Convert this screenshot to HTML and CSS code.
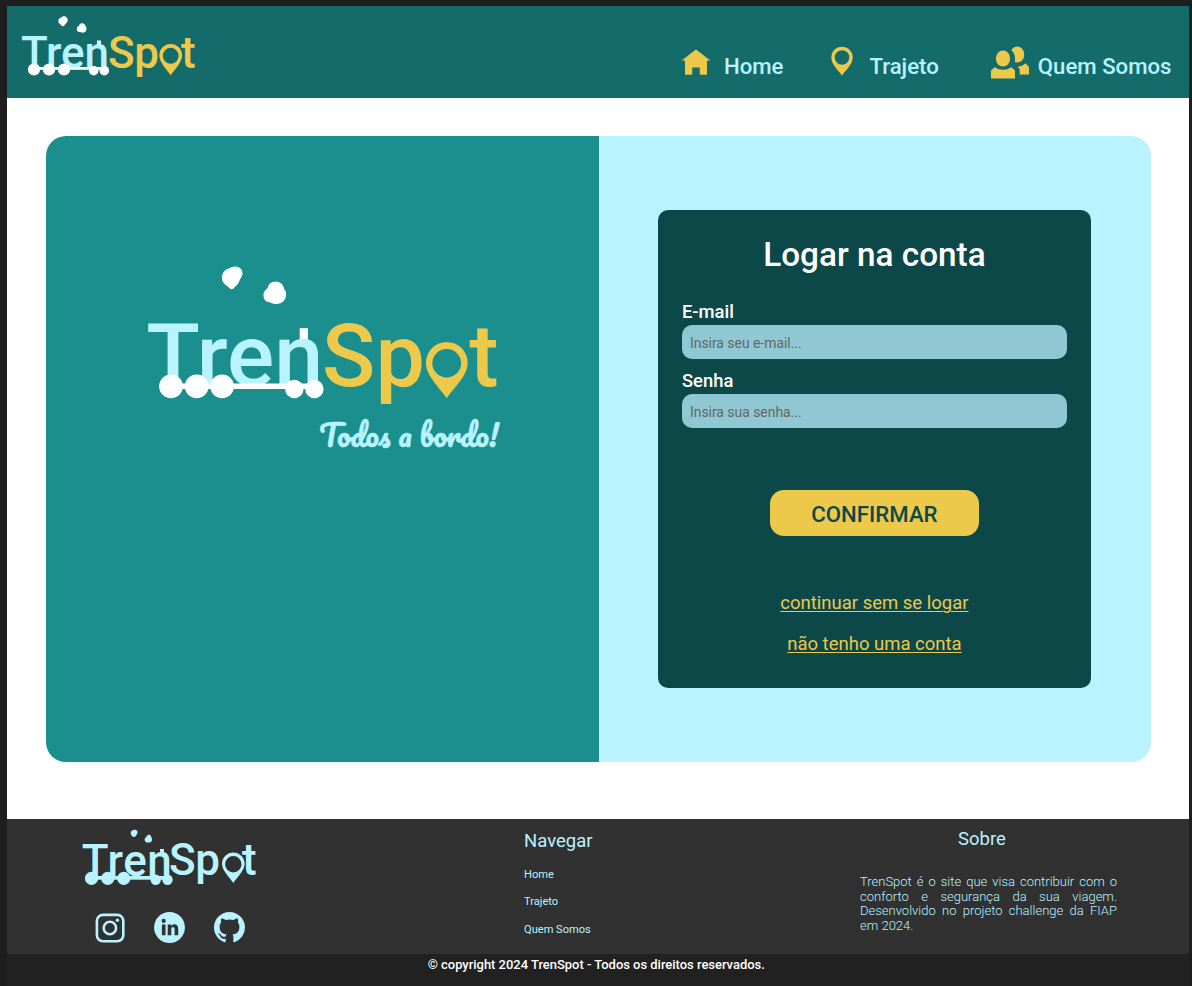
FILE: index.html
```html
<!DOCTYPE html>
<html lang="pt-BR">
<head>
<meta charset="utf-8">
<title>TrenSpot - Login</title>
<link rel="stylesheet" href="styles.css">
</head>
<body>
<div class="page">
  <header class="header">
    <svg class="header-logo" viewBox="20 12 180 68" role="img" aria-label="TrenSpot">
      <rect class="white" x="97" y="40.5" width="4" height="6"/>
      <text class="logo-text ice" x="21" y="68" font-size="44" textLength="88">Tren</text>
      <text class="logo-text gold" x="108" y="68" font-size="44" textLength="51">Sp</text>
      <text class="logo-text gold" x="181" y="68" font-size="44">t</text>
      <path class="gold" fill-rule="evenodd" d="M170.700 75.300C167.500 70.500 159.300 62.500 159.300 55.500A11.400 11.500 0 0 1 182.100 55.500C182.100 62.500 173.900 70.500 170.700 75.300ZM170.700 47.800A7.900 8 0 1 0 170.700 63.800A7.900 8 0 1 0 170.700 47.800Z"/>
      <g class="white">
        <path d="M58.300 21C58.500 18 61 18 62.500 16.500C65 15.500 68 17.500 67.700 20.500C67.400 22.500 65.500 23.500 64.500 25.200C63.300 26.800 62 26.500 61 25C59.500 23.500 58.300 23 58.300 21Z"/>
        <path d="M76.800 29C76.800 26.500 78.700 26.800 79.300 24.800C80.500 22.500 84 22.600 85 25C85.800 26.500 86.800 27.500 86.400 29.700C86 32.500 82.500 33.500 80.500 32.100C78.500 32.200 76.800 31.500 76.800 29Z"/>
        <rect x="34" y="67" width="70" height="2.800"/>
        <circle cx="34" cy="69.500" r="6.100"/><circle cx="49" cy="69.500" r="6.100"/><circle cx="64" cy="69.500" r="6.100"/>
        <circle cx="93.700" cy="70.700" r="4.800"/><circle cx="104.300" cy="70.700" r="4.800"/>
      </g>
    </svg>
    <nav class="nav">
      <a class="nav-link nav-home" href="#">
        <svg viewBox="0 0 30 27" width="30" height="27"><path d="M15 .6 29.300 11.600H26V25.800H18.800V18.400H11.200V25.800H4V11.600H.7Z"/></svg>
        <span>Home</span>
      </a>
      <a class="nav-link nav-route" href="#">
        <svg viewBox="0 0 24 30" width="24" height="30"><path fill-rule="evenodd" d="M12 29.700C9 24.800 1.300 18.600 1.300 11.500A10.700 10.800 0 0 1 22.700 11.500C22.700 18.600 15 24.800 12 29.700ZM12 4.200A7.300 7.300 0 1 0 12 18.800A7.300 7.300 0 1 0 12 4.200Z"/></svg>
        <span>Trajeto</span>
      </a>
      <a class="nav-link nav-about" href="#">
        <svg viewBox="0 0 38 33" width="38" height="33"><ellipse cx="12" cy="12.500" rx="7.100" ry="8.100"/><path d="M0 32.600V24.600L3.500 21.300Q12 26.400 20.500 21.300L24 24.600V32.600ZM20.300 4.100C22.500 1.500 24 .6 26.500 .6C30.500 .6 33.200 4.400 33.200 8.800C33.200 13.700 30 17.200 23.800 16.300C24.500 11 24 7.500 20.300 4.100ZM26.700 20.600Q31 20.600 34.300 17.300L38 21V28.600H28.700V23.600Z"/></svg>
        <span>Quem Somos</span>
      </a>
    </nav>
  </header>

  <main class="main">
    <section class="card">
      <div class="brand">
        <svg class="brand-logo" viewBox="140 260 370 200" role="img" aria-label="TrenSpot - Todos a bordo!">
          <rect class="white" x="299.700" y="328.200" width="8.200" height="13"/>
          <text class="logo-text ice" x="146.200" y="386" font-size="88" textLength="177">Tren</text>
          <text class="logo-text gold" x="322" y="386" font-size="88" textLength="103">Sp</text>
          <text class="logo-text gold" x="469.200" y="386" font-size="88">t</text>
          <path class="gold" fill-rule="evenodd" d="M446.700 398.300C440.500 388.500 425.900 376 425.900 363A20.800 21 0 0 1 467.700 363C467.700 376 453 388.500 446.700 398.300ZM446.700 349A14.400 14.200 0 1 0 446.700 377.400A14.400 14.200 0 1 0 446.700 349Z"/>
          <g class="white">
            <path d="M222 278.500C221.700 272.500 225.500 269 229.700 268.300C233 265.500 239 265.500 241.800 270C244 275 240.500 277.500 239.200 281.500C237.500 285.500 235 286.300 233.500 288.500C232 289.700 230 289.200 228.700 287.300C226 284.700 222.200 283.500 222 278.500Z"/>
            <path d="M263.500 295.500C263.300 291.500 266 289.300 267.800 288C268 284 271.500 281.500 276 281.400C280.500 281.600 283.500 285 284 288.500C287 292 286.800 297.500 283.800 301C280 305 274 304.500 269.500 302.200C266.200 302.400 263.500 299.500 263.500 295.500Z"/>
            <rect x="171" y="383.500" width="143" height="5.500"/>
            <circle cx="171" cy="386.300" r="11.900"/><circle cx="196.700" cy="386.300" r="11.900"/><circle cx="222.100" cy="386.300" r="11.900"/>
            <circle cx="294.300" cy="389" r="9.200"/><circle cx="314.400" cy="389" r="9.200"/>
          </g>
          <text class="tagline ice" x="319.200" y="447" font-size="29.500">Todos a bordo!</text>
        </svg>
      </div>
      <div class="access">
        <form class="login">
          <h1 class="login-title">Logar na conta</h1>
          <label class="login-label" for="email">E-mail</label>
          <input class="login-input" id="email" type="email" placeholder="Insira seu e-mail...">
          <label class="login-label" for="senha">Senha</label>
          <input class="login-input" id="senha" type="password" placeholder="Insira sua senha...">
          <button class="login-button" type="button">CONFIRMAR</button>
          <a class="login-link" href="#">continuar sem se logar</a>
          <a class="login-link" href="#">não tenho uma conta</a>
        </form>
      </div>
    </section>
  </main>

  <footer class="footer">
    <div class="footer-brand">
      <svg class="footer-logo" viewBox="80 826 180 62" role="img" aria-label="TrenSpot">
        <rect x="160" y="849" width="4" height="6"/>
        <text class="logo-text" x="81.800" y="876" font-size="44" textLength="90">Tren</text>
        <text class="logo-text" x="169" y="875" font-size="44" textLength="51">Sp</text>
        <text class="logo-text" x="242" y="875" font-size="44">t</text>
        <path fill-rule="evenodd" d="M233.300 883C230 878 222 870.500 222 864A11.300 11.500 0 0 1 244.600 864C244.600 870.500 236.600 878 233.300 883ZM233.300 856A8.200 8.200 0 1 0 233.300 872.400A8.200 8.200 0 1 0 233.300 856Z"/>
        <path d="M130.700 833C130.700 830.800 132.500 830.600 134 829.800C136.500 829.200 138.200 831.200 137.400 833.300C136.500 834.700 136 836.800 134.200 837.100C132.500 837 130.700 835.200 130.700 833Z"/>
        <path d="M144.600 839.500C144.700 837.700 146.200 837.500 146.800 836C148 834.200 150.500 834.500 151.200 836.700C152.300 838.500 152.500 841.500 150.300 842.300C148.500 842.800 144.500 843 144.600 839.500Z"/>
        <rect x="91" y="876" width="77" height="3.700"/>
        <circle cx="91.500" cy="878.400" r="6.600"/><circle cx="107.700" cy="878.400" r="6.600"/><circle cx="123.800" cy="878.400" r="6.600"/>
        <circle cx="155.700" cy="879.700" r="5.200"/><circle cx="167.500" cy="879.700" r="5.200"/>
      </svg>
      <div class="social">
        <a href="#" aria-label="Instagram"><svg viewBox="0 0 30 30" width="30" height="30"><g fill="none" stroke="currentColor" stroke-width="2.600"><rect x="1.900" y="1.900" width="26.400" height="26.400" rx="6"/><circle cx="14.900" cy="15" r="6.200"/></g><circle cx="22.400" cy="7.300" r="1.700"/></svg></a>
        <a href="#" aria-label="LinkedIn"><svg viewBox="0 0 31 31" width="31" height="31"><circle cx="15.500" cy="15.500" r="15.400"/><g fill="#313131"><circle cx="9.700" cy="8.900" r="2.100"/><path d="M7.900 12.400H11.500V23.300H7.900ZM13.700 12.400H17.100V13.900C19 11.200 24.200 11.600 24.200 16.600V23.300H20.600V17.400C20.600 14.200 17.300 14.300 17.300 17.400V23.300H13.700Z"/></g></svg></a>
        <a href="#" aria-label="GitHub"><svg viewBox="0 0 16 16" width="31" height="31"><path d="M8 0C3.580 0 0 3.580 0 8c0 3.540 2.290 6.530 5.470 7.590.4.070.55-.17.55-.38 0-.19-.01-.82-.01-1.490-2.010.37-2.530-.49-2.690-.94-.09-.23-.48-.94-.82-1.130-.28-.15-.68-.52-.01-.53.63-.01 1.080.58 1.230.82.72 1.210 1.870.87 2.330.66.07-.52.28-.87.51-1.070-1.780-.2-3.640-.89-3.640-3.950 0-.87.31-1.590.82-2.150-.08-.2-.36-1.020.08-2.120 0 0 .67-.21 2.200.82.64-.18 1.320-.27 2-.27s1.360.09 2 .27c1.530-1.040 2.200-.82 2.200-.82.44 1.100.16 1.920.08 2.120.51.56.82 1.270.82 2.150 0 3.070-1.870 3.750-3.650 3.950.29.25.54.73.54 1.480 0 1.070-.01 1.930-.01 2.200 0 .21.15.46.55.38A8.010 8.010 0 0 0 16 8c0-4.420-3.580-8-8-8z"/></svg></a>
      </div>
    </div>
    <nav class="footer-nav">
      <h2 class="footer-title">Navegar</h2>
      <a href="#">Home</a>
      <a href="#">Trajeto</a>
      <a href="#">Quem Somos</a>
    </nav>
    <section class="footer-about">
      <h2 class="footer-title">Sobre</h2>
      <p>TrenSpot é o site que visa contribuir com o conforto e segurança da sua viagem. Desenvolvido no projeto challenge da FIAP em 2024.</p>
    </section>
  </footer>
  <div class="copyright">© copyright 2024 TrenSpot - Todos os direitos reservados.</div>
</div>
</body>
</html>
```
FILE: styles.css
```css
* { box-sizing: border-box; }

body {
  margin: 0;
  padding: 6.4px 3.5px 0 7px;
  height: 986px;
  overflow: hidden;
  background: #1e1e1e;
  font-family: Roboto, sans-serif;
}

a { color: inherit; text-decoration: none; }
svg { display: block; fill: currentColor; }
h1, h2, p { margin: 0; }

.page { background: #fff; }
.ice { fill: #b8f3ff; }
.gold { fill: #ecc94b; }
.white { fill: #fff; }
.logo-text { font-family: Roboto, sans-serif; font-weight: 500; }

.header {
  display: flex;
  justify-content: space-between;
  height: 92px;
  padding: 5.6px 17px 0 13px;
  background: #146c6a;
}
.header-logo { width: 180px; height: 68px; }
.nav { display: flex; align-items: flex-start; padding-top: 33px; }
.nav-link {
  display: flex;
  color: #b8f3ff;
  font-size: 22.200px;
  font-weight: 500;
  line-height: 30px;
}
.nav-link svg { color: #ecc94b; }
.nav-link span { padding-top: 6px; }
.nav-home svg { margin: 4px 13px 0 0; }
.nav-route { margin-left: 47px; }
.nav-route svg { margin: 1px 15px 0 0; }
.nav-about { margin-left: 52px; }
.nav-about svg { margin: 1px 9px 0 0; }

.main { height: 720.500px; padding: 37.900px 37.500px 0 38.600px; }
.card {
  display: grid;
  grid-template-columns: 553.100px 1fr;
  height: 625.300px;
  border-radius: 20px;
  overflow: hidden;
}
.brand { padding: 123.700px 0 0 94.400px; background: #1b8f8d; }
.brand-logo { width: 370px; height: 200px; }
.tagline {
  font-family: "Pacifico", "Lato", cursive;
  font-weight: 400;
  stroke: #b8f3ff;
  stroke-width: .6px;
}

.access {
  display: flex;
  justify-content: center;
  align-items: flex-start;
  padding-top: 73.700px;
  background: #b8f3ff;
}
.login {
  display: flex;
  flex-direction: column;
  width: 433px;
  height: 478.300px;
  margin-right: .8px;
  padding: 25px 24px 0;
  border-radius: 10px;
  background: #0d4848;
}
.login-title {
  color: #fff;
  font-size: 33.300px;
  font-weight: 500;
  line-height: 40px;
  text-align: center;
  margin-bottom: 14.800px;
}
.login-label {
  margin-top: 9.500px;
  color: #fff;
  font-size: 18.400px;
  font-weight: 500;
  line-height: 25px;
}
.login-input {
  height: 34px;
  margin-top: .5px;
  padding: 3px 8px 0;
  border: 0;
  border-radius: 10px;
  background: #8fc7d3;
  font: 400 13.900px Roboto, sans-serif;
}
.login-input::placeholder { color: #666; opacity: 1; }
.login-button {
  align-self: center;
  width: 208.500px;
  height: 46.500px;
  margin: 61.800px 0 55px;
  padding: 3px 0 0;
  border: 0;
  border-radius: 14px;
  background: #ecc94b;
  color: #0d4848;
  font: 500 22.200px Roboto, sans-serif;
}
.login-link {
  align-self: center;
  margin-bottom: 17px;
  color: #ecc94b;
  font-size: 18.500px;
  line-height: 24px;
  text-decoration: underline;
  text-decoration-thickness: 1px;
  text-underline-offset: 2px;
}

.footer {
  display: grid;
  grid-template-columns: 517px 336px 257px;
  height: 135px;
  background: #313131;
  color: #b8f3ff;
}
.footer-brand { padding: 7px 0 0 73px; }
.footer-logo { width: 180px; height: 62px; }
.social { display: flex; align-items: center; gap: 29px; padding: 24.600px 0 0 15px; }
.footer-title { font-size: 18.500px; font-weight: 400; line-height: 24px; }
.footer-nav {
  display: flex;
  flex-direction: column;
  padding-top: 9.700px;
  font-size: 11.100px;
  line-height: 16px;
}
.footer-nav a { margin-bottom: 11.800px; }
.footer-nav .footer-title { margin-bottom: 14px; }
.footer-about { padding-top: 8.500px; }
.footer-about .footer-title { margin: 0 13px 23.500px 0; text-align: center; }
.footer-about p {
  font-size: 13px;
  font-weight: 300;
  line-height: 14.800px;
  text-align: justify;
}
.copyright {
  height: 32px;
  padding-right: 3px;
  background: #212121;
  color: #fff;
  font-size: 12.950px;
  font-weight: 500;
  line-height: 22px;
  text-align: center;
}
```
